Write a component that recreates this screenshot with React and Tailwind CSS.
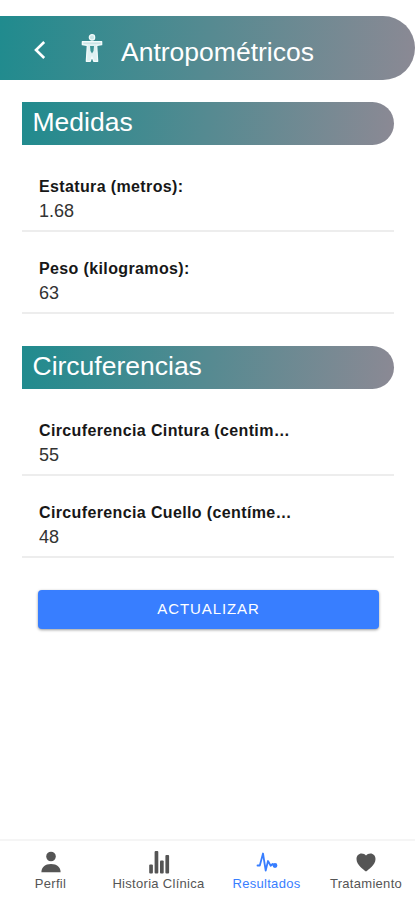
import React, { useState } from 'react';

const sections = [
  {
    title: 'Medidas',
    fields: [
      { label: 'Estatura (metros):', value: '1.68' },
      { label: 'Peso (kilogramos):', value: '63' },
    ],
  },
  {
    title: 'Circuferencias',
    fields: [
      { label: 'Circuferencia Cintura (centim…', value: '55' },
      { label: 'Circuferencia Cuello (centíme…', value: '48' },
    ],
  },
];

function BodyIcon(){
  return (
    <svg viewBox="0 0 22 28" className="w-[22px] h-7" fill="none">
      <circle cx="11" cy="3.4" r="2.7" fill="#c9e6e7" stroke="#f4fcfc" strokeWidth="1.2" />
      <path d="M1.300 7.700h19.400v3L15.700 11.500l1 15.800h-4L11 22.500l-1.700 4.800h-4l1-15.800-5-.8z" fill="#dff1f2" stroke="#f4fcfc" strokeWidth="1.200" strokeLinejoin="round" />
      <path d="M2.500 9.200h17" stroke="#b5d8da" strokeWidth=".7" />
      <path d="M9 12h4l-.5 5L11 19.500 9.500 17z" fill="#3d9496" />
    </svg>
  );
}

function PersonIcon(){
  return (
    <svg viewBox="0 0 20 22" className="w-5 h-[22px]" fill="currentColor">
      <circle cx="10" cy="5.500" r="4.800" />
      <path d="M.4 21.300c0-4.900 3.700-8.200 9.600-8.200s9.600 3.300 9.600 8.200z" />
    </svg>
  );
}

function StatsIcon(){
  return (
    <svg viewBox="0 0 22 24" className="w-[22px] h-6" fill="currentColor">
      <rect x="1.200" y="14.500" width="3.700" height="9" rx="1" />
      <rect x="6.600" y="1" width="3.700" height="22.500" rx="1" />
      <rect x="12" y="10.500" width="3.700" height="13" rx="1" />
      <rect x="17.400" y="5" width="3.700" height="18.500" rx="1" />
    </svg>
  );
}

function PulseIcon(){
  return (
    <svg viewBox="0 0 22 20" className="w-[22px] h-5" fill="none" stroke="currentColor" strokeWidth="1.800" strokeLinecap="round" strokeLinejoin="round">
      <path d="M1.500 13.500h2.300L7 1.500l2.700 17 2.300-9.500 2.700 4.800 1.800-1.800 1.500 1.500" />
      <circle cx="19" cy="13.500" r="1.500" fill="currentColor" />
    </svg>
  );
}

function HeartIcon(){
  return (
    <svg viewBox="0 0 20 19" className="w-5 h-[19px]" fill="currentColor">
      <path d="M10 18.500C7.500 16.500.5 12 .5 6 .5 2.800 2.800.5 5.500.5 7.500.5 9 1.200 10 2.500c1-1.300 2.500-2 4.500-2 2.700 0 5 2.300 5 5.500 0 6-7 10.500-9.500 12.500z" />
    </svg>
  );
}

const tabs = [
  { name: 'Perfil', icon: PersonIcon, width: 'w-[101px]' },
  { name: 'Historia Clínica', icon: StatsIcon, width: 'w-[115px]' },
  { name: 'Resultados', icon: PulseIcon, width: 'w-[101px]' },
  { name: 'Tratamiento', icon: HeartIcon, width: 'w-[98px]' },
];

function Section({ title, fields }){
  return (
    <section className="h-[244px] pl-[22px] pr-[21px]">
      <h2 className="h-[42.5px] pl-[10.5px] rounded-r-full bg-linear-[95deg] from-[#208b8e] to-[#8b8994] text-white text-[26.5px] leading-[40px]">{title}</h2>
      <div className="pt-[5.5px]">
        {fields.map(f => (
          <div key={f.label} className="h-[82px] pt-[25.5px] pl-[17px] border-b-2 border-[#ededed]">
            <div className="text-[16px] leading-[22px] font-bold tracking-[0.37px] text-[#171717] whitespace-nowrap">{f.label}</div>
            <div className="pt-[1.5px] text-[18px] leading-[24px] text-[#333]">{f.value}</div>
          </div>
        ))}
      </div>
    </section>
  );
}

export default function App(){
  const [active, setActive] = useState('Resultados');

  return (
    <div className="w-[415px] h-[900px] flex flex-col bg-white font-['Liberation_Sans',Arial,sans-serif] overflow-hidden">
      <header className="mt-4 h-16 shrink-0 flex items-center rounded-r-full bg-linear-[95deg] from-[#208b8e] to-[#8b8994] text-white">
        <button className="ml-[34px] w-3 pt-[3px]" aria-label="Volver">
          <svg viewBox="0 0 12 18" className="w-3 h-[18px]" fill="none" stroke="currentColor" strokeWidth="2.600">
            <path d="M10.200 1L2 9l8.200 8" />
          </svg>
        </button>
        <div className="ml-[35px]"><BodyIcon /></div>
        <h1 className="ml-[18px] pt-2 text-[26.5px] leading-8">Antropométricos</h1>
      </header>

      <main className="flex-1 pt-[22px]">
        {sections.map(s => <Section key={s.title} title={s.title} fields={s.fields} />)}
        <button className="ml-[38px] w-[341px] h-[39px] block rounded-[4px] bg-[#387eff] text-white text-[15px] font-medium tracking-[0.9px] shadow-[0_1px_3px_rgba(0,0,0,0.4)]">ACTUALIZAR</button>
      </main>

      <nav className="h-[61px] shrink-0 flex border-t-2 border-[#f5f5f5]">
        {tabs.map(({ name, icon: Icon, width }) => (
          <button key={name} onClick={() => setActive(name)} className={`${width} flex flex-col items-center pt-[9px] ${active === name ? 'text-[#387eff]' : 'text-[#555]'}`}>
            <span className="h-6 flex items-center justify-center">
              <Icon />
            </span>
            <span className="pt-[2px] text-[13px] leading-4 tracking-[0.3px] whitespace-nowrap">{name}</span>
          </button>
        ))}
      </nav>
    </div>
  );
}
